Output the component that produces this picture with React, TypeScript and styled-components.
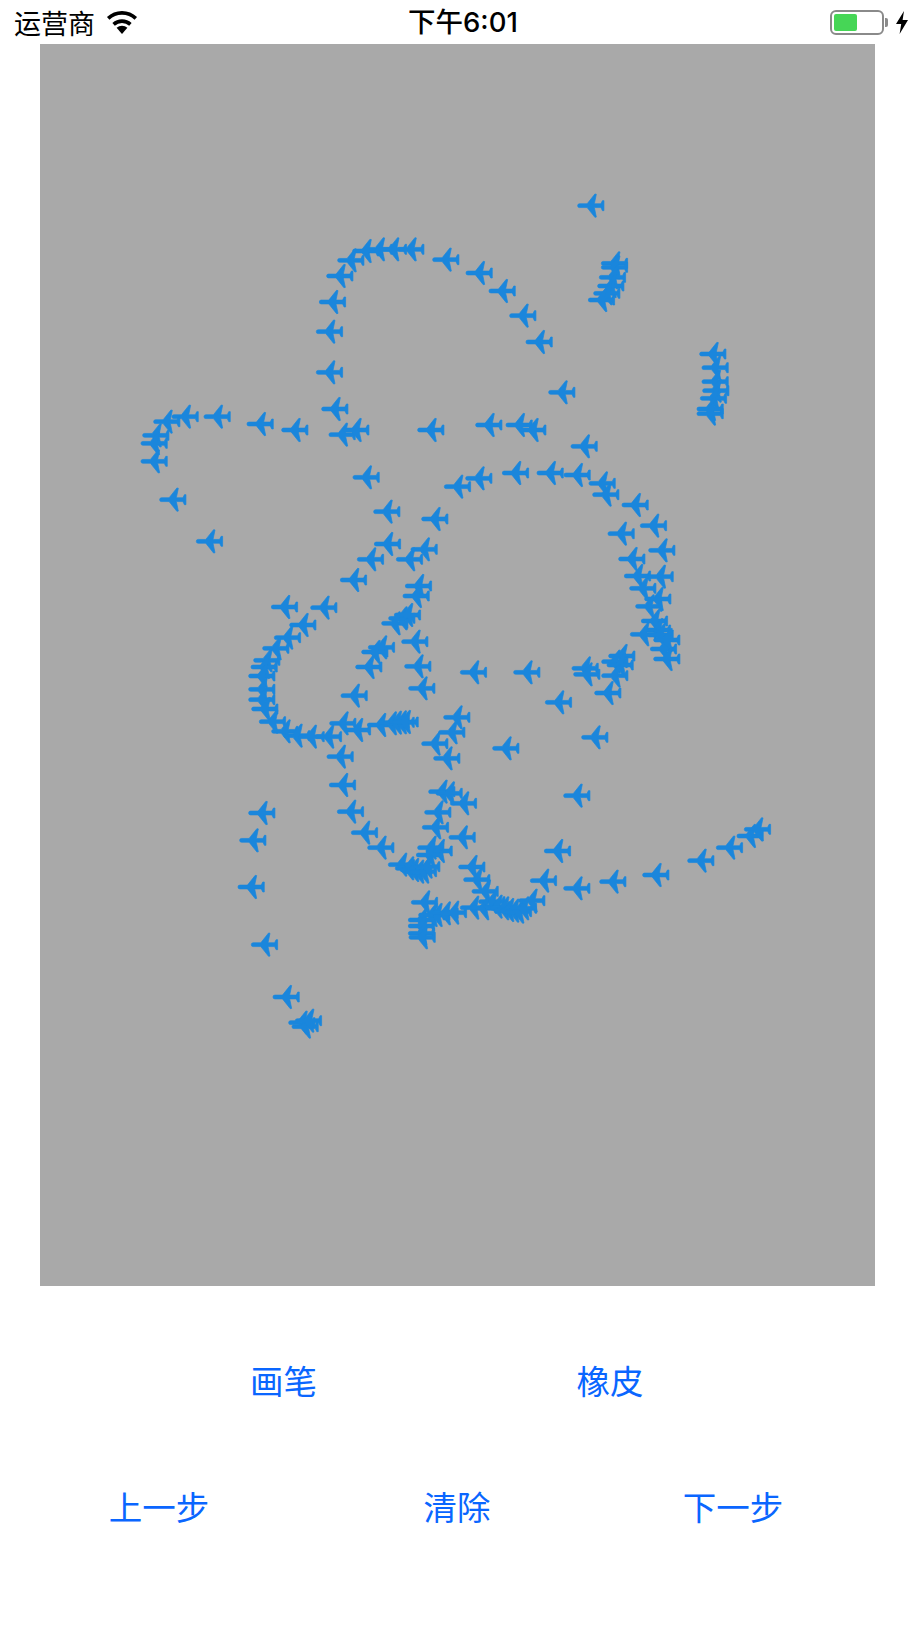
import * as React from 'react';
import styled, { createGlobalStyle } from 'styled-components';

const CJK = '"Noto Sans CJK SC", "Liberation Sans", sans-serif';

const GlobalStyle = createGlobalStyle`
  html, body {
    margin: 0;
    padding: 0;
    background: #fff;
  }
`;

const Page = styled.div`
  width: 919px;
  height: 1635px;
  background: #fff;
  overflow: hidden;
`;

const StatusBar = styled.div`
  display: grid;
  grid-template-columns: 394px 112px 1fr;
  align-items: center;
  height: 44px;
  padding: 1px 10px 0 14px;
  box-sizing: border-box;
  color: #000;
`;

const Carrier = styled.div`
  display: flex;
  align-items: center;
  gap: 11px;
  font: 400 27px/43px ${CJK};
`;

const Clock = styled.div`
  font: 500 27.5px/43px Inter, ${CJK};
  white-space: nowrap;
`;

const Power = styled.div`
  display: flex;
  align-items: center;
  justify-content: flex-end;
  gap: 11px;
`;

const Battery = styled.div`
  width: 54px;
  height: 25px;
  box-sizing: border-box;
  border: 2px solid #8a8a8a;
  border-radius: 6px;
  padding: 2px;
  display: flex;
  position: relative;

  &::after {
    content: '';
    position: absolute;
    right: -6px;
    top: 6px;
    width: 3px;
    height: 9px;
    background: #8a8a8a;
    border-radius: 0 2px 2px 0;
  }
`;

const BatteryFill = styled.div`
  background: #46d656;
  border-radius: 2px;
`;

const Canvas = styled.div`
  width: 835px;
  height: 1242px;
  margin-left: 40px;
  background: #a9a9a9;
`;

const Controls = styled.div`
  display: flex;
  flex-direction: column;
  padding-top: 71px;
  gap: 80px;
`;

const ControlRow = styled.div<{ $columns: string }>`
  display: grid;
  grid-template-columns: ${(p) => p.$columns};
`;

const ControlButton = styled.button`
  border: 0;
  padding: 0;
  background: none;
  color: #0a66ff;
  font: 400 33.5px/46px ${CJK};
  text-align: center;
  white-space: nowrap;
`;

const offset = (ox: number, oy: number, pts: number[][]) =>
  pts.map(([x, y]) => [ox + x / 3, oy + y / 3]);

// nose position of each stamp, read off the crops of the drawing
const stamps = [
  ...offset(100, 180, [
    [892, 208], [840, 208], [797, 208], [757, 213], [712, 241], [679, 288], [657, 366], [648, 455],
    [648, 577], [664, 687], [686, 764], [727, 750], [311, 710], [215, 710], [160, 725], [127, 766],
    [122, 790], [122, 844], [440, 732], [544, 750], [178, 959], [288, 1084], [758, 892], [820, 995],
    [822, 1092], [771, 1138], [888, 1138],
  ]),
  ...offset(400, 180, [
    [532, 77], [603, 250], [603, 262], [597, 292], [592, 318], [580, 340], [564, 360], [97, 239],
    [197, 279], [266, 333], [328, 407], [377, 486], [445, 637], [52, 750], [226, 735], [317, 735],
    [358, 750], [512, 799], [306, 879], [410, 879], [491, 885], [566, 910], [577, 944], [665, 975],
    [720, 1037], [623, 1061], [745, 1111], [655, 1137], [672, 1188], [740, 1190], [898, 522],
    [905, 563], [905, 605], [907, 632], [900, 655], [890, 687], [890, 701], [132, 920], [196, 895],
    [64, 1017], [32, 1108],
  ]),
  ...offset(460, 520, [
    [508, 205], [553, 237], [526, 259], [543, 303], [552, 330], [510, 343], [560, 345], [570, 387],
    [580, 360], [580, 417], [445, 408], [424, 425], [440, 435], [424, 467], [403, 519], [335, 445],
    [340, 463], [255, 547], [0, 457], [160, 457], [364, 652], [97, 685],
  ]),
  ...offset(220, 560, [
    [360, 60], [555, 78], [548, 108], [505, 175], [522, 165], [484, 190], [544, 245], [444, 262],
    [424, 276], [406, 321], [553, 319], [565, 385], [362, 407], [153, 141], [271, 143], [208, 195],
    [162, 233], [127, 265], [100, 301], [92, 321], [85, 348], [85, 388], [85, 419], [94, 447],
    [117, 485], [154, 514], [190, 527], [233, 530], [285, 530], [328, 490], [372, 510], [441, 495],
    [473, 490], [488, 488], [503, 487], [515, 486], [320, 590], [327, 675], [351, 755],
  ]),
  ...offset(400, 680, [
    [130, 112], [115, 157], [64, 191], [100, 235], [85, 335], [107, 340], [150, 370], [73, 397],
    [66, 442], [146, 472], [52, 503], [77, 513],
  ]),
  ...offset(380, 820, [
    [108, 105], [24, 134], [45, 145], [60, 150], [75, 155], [90, 155], [100, 140], [235, 141],
    [250, 179], [275, 214], [295, 245], [93, 247], [84, 300], [84, 318], [84, 340], [86, 352],
    [115, 285], [130, 285], [155, 280], [180, 278], [240, 263], [270, 265], [310, 260], [330, 265],
    [345, 270], [360, 272], [375, 275], [390, 265], [415, 242],
  ]),
  ...offset(220, 760, [
    [85, 159], [58, 241], [53, 381], [93, 554], [158, 711], [205, 788], [215, 800], [225, 782],
    [393, 218], [442, 263],
  ]),
  ...offset(530, 770, [
    [100, 77], [42, 243], [0, 332], [100, 355], [208, 335], [337, 315], [472, 272], [558, 233],
    [620, 198], [642, 178],
  ]),
];

const PLANE =
  'M2.2 -1.9 H9.8 L17.6 -11.7 L19 -11.4 L17 -1.9 H23.6 L25.1 -5 H26.6 V5 H25.1 L23.6 1.9 H17 L19 11.4 L17.6 11.7 L9.8 1.9 H2.2 A1.9 1.9 0 0 1 2.2 -1.9 Z';

const Drawing = () => (
  <svg width="835" height="1242" viewBox="40 44 835 1242" style={{ display: 'block' }}>
    {stamps.map(([x, y], i) => (
      <path
        key={i}
        d={PLANE}
        transform={`translate(${x} ${y})`}
        fill="#1a86dc"
        stroke="#1a86dc"
        strokeWidth="0.7"
        strokeLinejoin="round"
      />
    ))}
  </svg>
);

const Wifi = () => (
  <svg width="32" height="23" viewBox="0 0 32 23">
    <path d="M16 23 L10.6 16.8 A8 8 0 0 1 21.4 16.8 Z" fill="#000" />
    <path d="M7.6 13.4 A12.5 12.5 0 0 1 24.4 13.4" fill="none" stroke="#000" strokeWidth="3.6" />
    <path d="M2.2 7.4 A20 20 0 0 1 29.8 7.4" fill="none" stroke="#000" strokeWidth="3.6" />
  </svg>
);

const Bolt = () => (
  <svg width="14" height="23" viewBox="0 0 14 23">
    <path d="M9 0 L1 13 H6.2 L4.6 23 L13 9 H7.6 Z" fill="#000" />
  </svg>
);

export default function App() {
  return (
    <Page>
      <GlobalStyle />
      <StatusBar>
        <Carrier>
          运营商
          <Wifi />
        </Carrier>
        <Clock>下午6:01</Clock>
        <Power>
          <Battery>
            <BatteryFill style={{ width: '50%' }} />
          </Battery>
          <Bolt />
        </Power>
      </StatusBar>
      <Canvas>
        <Drawing />
      </Canvas>
      <Controls>
        <ControlRow $columns="567px 86px">
          <ControlButton>画笔</ControlButton>
          <ControlButton>橡皮</ControlButton>
        </ControlRow>
        <ControlRow $columns="318px 278px 274px">
          <ControlButton>上一步</ControlButton>
          <ControlButton>清除</ControlButton>
          <ControlButton>下一步</ControlButton>
        </ControlRow>
      </Controls>
    </Page>
  );
}
